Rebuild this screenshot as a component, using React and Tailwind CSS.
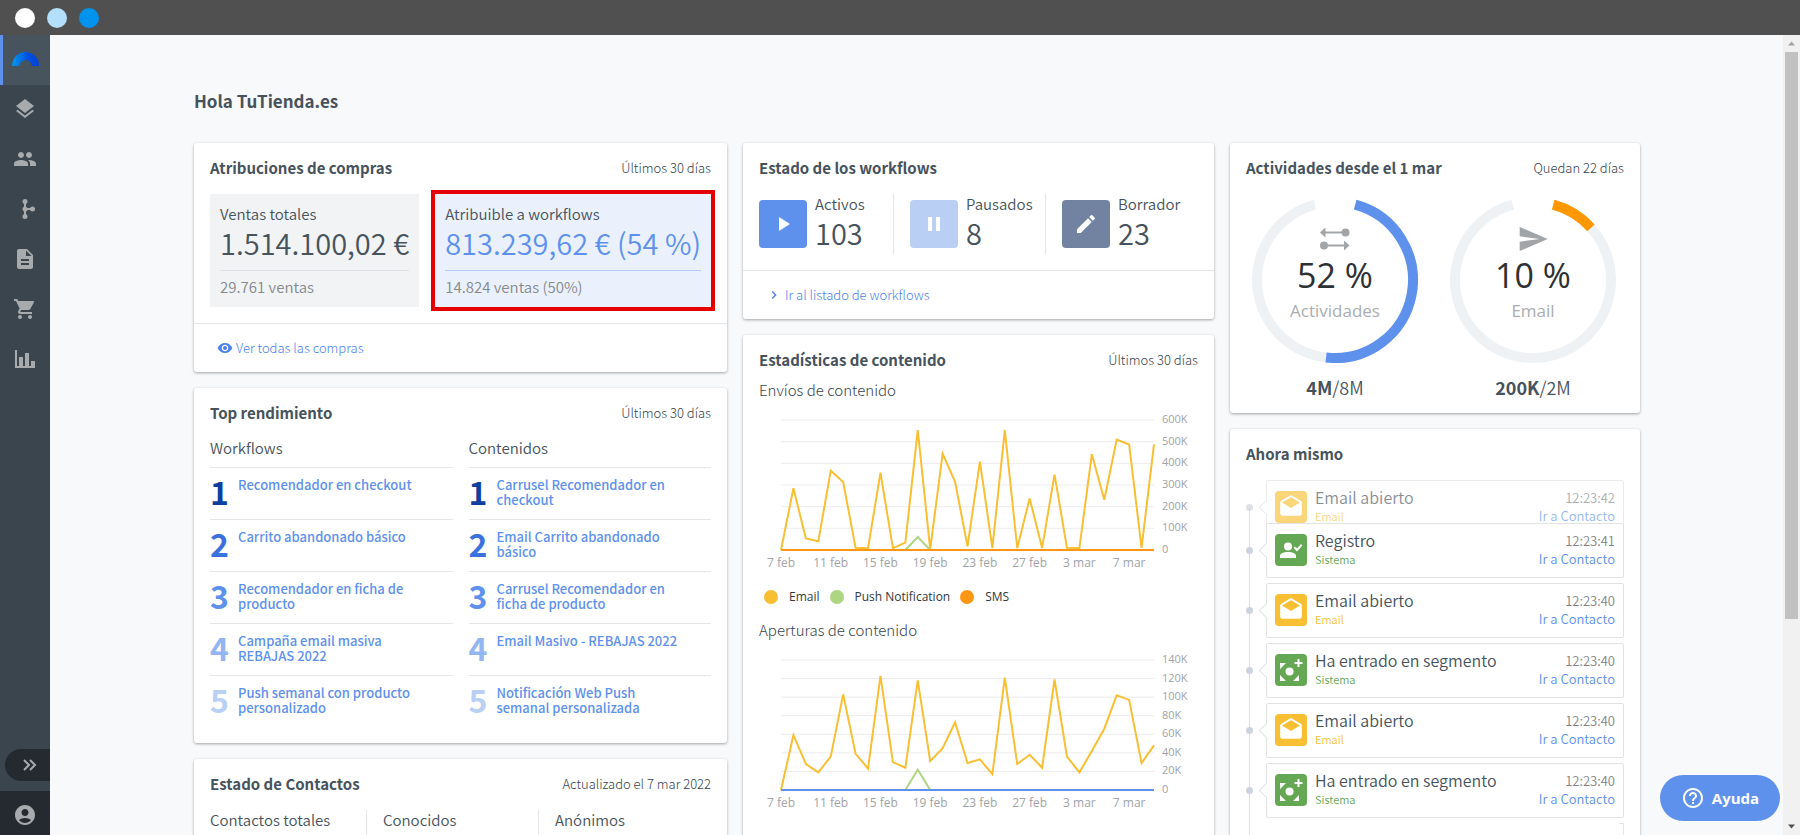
import {
  MdAccountCircle,
  MdChevronRight,
  MdDescription,
  MdDrafts,
  MdEdit,
  MdHelpOutline,
  MdLayers,
  MdPause,
  MdPeople,
  MdPlayArrow,
  MdRemoveRedEye,
  MdSend,
  MdShoppingCart,
} from 'react-icons/md'

const sendsEmail = [0, 285, 53, 40, 366, 314, 10, 8, 357, 9, 34, 553, 3, 445, 315, 17, 408, 9, 553, 9, 238, 9, 348, 10, 9, 442, 232, 510, 487, 10, 487]
const opensEmail = [0, 59, 28, 19, 36, 103, 39, 23, 123, 30, 24, 118, 31, 45, 73, 29, 33, 17, 121, 28, 38, 24, 119, 36, 19, 42, 66, 102, 97, 29, 48]
const dayLabels = ['7 feb', '11 feb', '15 feb', '19 feb', '23 feb', '27 feb', '3 mar', '7 mar']

const rankColors = ['text-[#0d3f9e]', 'text-[#3a71dc]', 'text-[#5e91ec]', 'text-[#93b5f1]', 'text-[#b9cff4]']

const topWorkflows = [
  'Recomendador en checkout',
  'Carrito abandonado básico',
  'Recomendador en ficha de producto',
  'Campaña email masiva REBAJAS 2022',
  'Push semanal con producto personalizado',
]
const topContents = [
  'Carrusel Recomendador en checkout',
  'Email Carrito abandonado básico',
  'Carrusel Recomendador en ficha de producto',
  'Email Masivo - REBAJAS 2022',
  'Notificación Web Push semanal personalizada',
]

const events = [
  { type: 'email', title: 'Email abierto', time: '12:23:42' },
  { type: 'register', title: 'Registro', time: '12:23:41' },
  { type: 'email', title: 'Email abierto', time: '12:23:40' },
  { type: 'segment', title: 'Ha entrado en segmento', time: '12:23:40' },
  { type: 'email', title: 'Email abierto', time: '12:23:40' },
  { type: 'segment', title: 'Ha entrado en segmento', time: '12:23:40' },
]

const LogoIcon = () => (
  <svg width="27" height="14" viewBox="0 0 27 14">
    <defs>
      <linearGradient id="logo" x1="0" x2="1" y1="0" y2="0">
        <stop offset="0" stopColor="#0098e8" />
        <stop offset="0.6" stopColor="#0050e0" />
        <stop offset="1" stopColor="#0040d8" />
      </linearGradient>
    </defs>
    <path d="M0 14a13.500 14 0 0 1 27 0h-7.500a6 6 0 0 0-12 0z" fill="url(#logo)" />
  </svg>
)

const BranchIcon = () => (
  <svg width="24" height="24" viewBox="0 0 24 24" fill="currentColor">
    <circle cx="12" cy="4.500" r="2.500" />
    <circle cx="12" cy="12" r="2.500" />
    <circle cx="12" cy="19.500" r="2.500" />
    <circle cx="19.500" cy="12" r="2.500" />
    <path d="M11 4h2v7h6v2h-6v7h-2z" />
  </svg>
)

const BarsIcon = () => (
  <svg width="24" height="24" viewBox="0 0 24 24" fill="currentColor">
    <path d="M2 3h2v16h2V10h4v9h2V6h4v13h2v-5h4v7H2z" />
  </svg>
)

const SwapIcon = () => (
  <svg width="30" height="24" viewBox="0 0 30 24" fill="currentColor">
    <path d="M0 5.500l5.500-5v4H26v2H5.500v4z" />
    <circle cx="25.500" cy="5.500" r="4" />
    <path d="M29.500 18.500l-5.500-5v4H4v2h20v4z" />
    <circle cx="4" cy="18.500" r="4" />
  </svg>
)

const UserCheckIcon = () => (
  <svg width="32" height="32" viewBox="0 0 32 32" fill="#fff">
    <circle cx="13" cy="12.500" r="4" />
    <path d="M5 24v-2c0-3 4-4 8-4s8 1 8 4v2z" />
    <path d="M18.500 14l1.500-1.500 2 2 4-4.500 1.400 1.400-5.400 6z" />
  </svg>
)

const SegmentIcon = () => (
  <svg width="32" height="32" viewBox="0 0 32 32" fill="#fff">
    <circle cx="14.500" cy="17.500" r="4" />
    <path d="M5 9h6l-6 6zM5 21l6 6H5zM24 21v6h-6zM22.500 5h2v3h3v2h-3v3h-2v-3h-3V8h3z" />
  </svg>
)

const eventKinds = {
  email: { label: 'Email', color: 'text-[#f9bf33]', bg: 'bg-[#f9bf33]', icon: <MdDrafts size={26} className="text-white" /> },
  register: { label: 'Sistema', color: 'text-[#65a854]', bg: 'bg-[#65a854]', icon: <UserCheckIcon /> },
  segment: { label: 'Sistema', color: 'text-[#65a854]', bg: 'bg-[#65a854]', icon: <SegmentIcon /> },
}

const Card = ({ title, note, tight, children }) => (
  <section className="bg-white rounded-[3px] shadow-[0_1px_3px_rgba(0,0,0,0.35)]">
    <header className={`flex items-center justify-between px-4 pt-[15px] ${tight ? 'pb-[10px]' : 'pb-4'}`}>
      <h2 className="text-[15px] leading-5 font-bold">{title}</h2>
      {note && <span className="text-[13px] leading-5 font-light text-[#36424c]">{note}</span>}
    </header>
    {children}
  </section>
)

const CardLink = ({ icon, children }) => (
  <footer className="border-t border-[#e3e5e7] px-[23px] h-[49px] flex items-center">
    <a href="#" className="flex items-center gap-[3px] text-[13px] font-light text-[#4a82ea]">
      {icon}
      {children}
    </a>
  </footer>
)

const RankList = ({ title, items }) => (
  <div>
    <h3 className="text-[15px] leading-[18px] pb-[10px]">{title}</h3>
    <ol>
      {items.map((item, index) => (
        <li key={item} className="flex h-[52px] border-t border-[#e3e5e7] pt-[9px]">
          <span className={`w-7 shrink-0 text-[32px] leading-7 font-bold ${rankColors[index]}`}>{index + 1}</span>
          <a href="#" className="text-[13px] leading-[15px] font-medium text-[#5e91ec] max-w-[188px]">{item}</a>
        </li>
      ))}
    </ol>
  </div>
)

const StatusItem = ({ icon, bg, label, value }) => (
  <div className="flex items-center gap-2 h-[60px]">
    <div className={`w-12 h-12 rounded-[4px] flex items-center justify-center text-white ${bg}`}>{icon}</div>
    <div>
      <p className="text-[15px] leading-5">{label}</p>
      <p className="text-[29px] leading-9 pb-1">{value}</p>
    </div>
  </div>
)

const LineChart = ({ email, push, max, step, baseColor }) => {
  const left = 22
  const top = 20
  const width = 373
  const height = 130
  const x = (i) => left + (i * width) / 30
  const y = (v) => top + height - (v * height) / max
  const ticks = Array.from({ length: max / step + 1 }, (_, i) => i * step)
  return (
    <svg viewBox="0 0 439 172" className="w-full h-auto font-normal font-['Open_Sans','Noto_Sans',sans-serif]">
      {ticks.map((t) => (
        <g key={t}>
          <line x1={left} x2={left + width} y1={y(t)} y2={y(t)} stroke="#ececec" />
          <text x={left + width + 8} y={y(t) + 3} fontSize="11" fill="#a0a3a6">{t ? `${t}K` : '0'}</text>
        </g>
      ))}
      <polyline points={email.map((v, i) => `${x(i)},${y(v)}`).join(' ')} fill="none" stroke="#f9bf33" strokeWidth="2" />
      <polyline points={`${x(10)},${y(0)} ${x(11)},${y(push)} ${x(12)},${y(0)}`} fill="none" stroke="#aed581" strokeWidth="2" />
      <line x1={left} x2={left + width} y1={y(0)} y2={y(0)} stroke={baseColor} strokeWidth="2" />
      {dayLabels.map((label, i) => (
        <text key={label} x={x(i * 4)} y={top + height + 17} fontSize="12" textAnchor="middle" fill="#a0a3a6">{label}</text>
      ))}
    </svg>
  )
}

const LegendItem = ({ color, label }) => (
  <span className="flex items-center gap-[11px]">
    <span className={`w-[14px] h-[14px] rounded-full ${color}`} />
    {label}
  </span>
)

const arc = (from, to) => {
  const point = (deg) => {
    const rad = (deg * Math.PI) / 180
    return `${83 + 78 * Math.sin(rad)} ${83 - 78 * Math.cos(rad)}`
  }
  return `M${point(from)}A78 78 0 ${to - from > 180 ? 1 : 0} 1 ${point(to)}`
}

const Gauge = ({ icon, percent, color, label, used, total }) => (
  <div className="flex flex-col items-center">
    <div className="relative w-[166px] h-[166px]">
      <svg viewBox="0 0 166 166" className="w-full h-full" fill="none" strokeWidth="10">
        <path d={arc(15, 345)} stroke="#eff2f5" />
        <path d={arc(15, 15 + (percent * 330) / 100)} stroke={color} />
      </svg>
      <div className="absolute inset-0 flex flex-col items-center pt-[30px] font-normal font-['Open_Sans','Noto_Sans',sans-serif]">
        <span className="h-6 flex items-center text-[#a1a5a8]">{icon}</span>
        <span className="text-[34px] leading-[48px] text-[#2e3133]">{percent} %</span>
        <span className="text-[17px] leading-6 text-[#aaadaf]">{label}</span>
      </div>
    </div>
    <p className="text-lg leading-6 pt-3">
      <strong>{used}</strong>/{total}
    </p>
  </div>
)

const EventRow = ({ event, index }) => {
  const kind = eventKinds[event.type]
  return (
    <li className={`relative flex items-center ${index === 0 ? 'opacity-65' : ''} ${index === 1 ? '-mt-[17px]' : ''}`}>
      <span className="w-[7px] h-[7px] rounded-full bg-[#cdd3dc] shrink-0" />
      <div className="relative ml-[13px] flex-1 h-[55px] bg-white border border-[#e0e2e4] rounded-[2px] flex justify-between pl-2 pr-2">
        <span className="absolute -left-[6px] top-[21px] w-[11px] h-[11px] rotate-45 bg-white border-l border-b border-[#e0e2e4]" />
        <div className="flex gap-2 pt-[10px]">
          <span className={`relative w-8 h-8 rounded-[4px] flex items-center justify-center ${kind.bg}`}>{kind.icon}</span>
          <div className="-mt-1">
            <p className="text-base leading-5">{event.title}</p>
            <p className={`text-[11px] leading-[18px] ${kind.color}`}>{kind.label}</p>
          </div>
        </div>
        <div className="text-[13px] leading-[18px] pt-[8px] text-right">
          <p className="text-[#7e8386]">{event.time}</p>
          <a href="#" className="text-[#5e91ec]">Ir a Contacto</a>
        </div>
      </div>
    </li>
  )
}

const NavItem = ({ label, children }) => (
  <a href="#" aria-label={label} className="h-[50px] pb-[2px] flex items-center justify-center">
    {children}
  </a>
)

const Sidebar = () => (
  <nav className="w-[50px] shrink-0 bg-[#3b454d] text-[#a7abad] flex flex-col">
    <a href="#" aria-label="Inicio" className="h-[50px] pb-[2px] pr-[3px] flex items-center justify-center border-l-[3px] border-[#5e91ec] bg-[#48545d]">
      <LogoIcon />
    </a>
    <NavItem label="Contenidos"><MdLayers size={24} /></NavItem>
    <NavItem label="Contactos"><MdPeople size={24} /></NavItem>
    <NavItem label="Workflows"><BranchIcon /></NavItem>
    <NavItem label="Documentos"><MdDescription size={24} /></NavItem>
    <NavItem label="Compras"><MdShoppingCart size={24} /></NavItem>
    <NavItem label="Informes"><BarsIcon /></NavItem>
    <button type="button" aria-label="Expandir" className="mt-auto mb-[10px] ml-[5px] h-8 rounded-l-full bg-[#252a31] flex items-center justify-center pl-1">
      <svg width="14" height="12" viewBox="0 0 14 12" fill="none" stroke="currentColor" strokeWidth="2">
        <path d="M1 1l5 5-5 5M7 1l5 5-5 5" />
      </svg>
    </button>
    <a href="#" aria-label="Cuenta" className="h-11 bg-[#252a31] flex items-center justify-center pt-1">
      <MdAccountCircle size={24} />
    </a>
  </nav>
)

const Scrollbar = () => (
  <div className="w-[17px] shrink-0 bg-[#f1f1f1] flex flex-col items-center justify-between">
    <svg width="17" height="17" viewBox="0 0 17 17"><path d="M5 10.500l3.500-4 3.500 4z" fill="#a3a3a3" /></svg>
    <div className="flex-1 w-full px-[2px]">
      <div className="h-[74%] bg-[#c1c1c1]" />
    </div>
    <svg width="17" height="17" viewBox="0 0 17 17"><path d="M5 6.500l3.500 4 3.500-4z" fill="#505050" /></svg>
  </div>
)

export default function App() {
  return (
    <div className="h-screen flex flex-col overflow-hidden font-[350] text-[#46525c] font-['Noto_Sans_CJK_JP','Open_Sans',sans-serif]">
      <div className="h-[35px] shrink-0 bg-[#505050] flex items-center gap-3 px-[15px]">
        <span className="w-5 h-5 rounded-full bg-white" />
        <span className="w-5 h-5 rounded-full bg-[#b3dffa]" />
        <span className="w-5 h-5 rounded-full bg-[#0093ed]" />
      </div>

      <div className="relative flex flex-1 min-h-0">
        <Sidebar />

        <main className="flex-1 min-w-0 overflow-hidden bg-[#f8f9fb] pl-[25px] pr-6">
          <div className="w-full max-w-[1446px] mx-auto pt-[54px]">
            <h1 className="text-[17px] leading-6 font-bold pb-[30px]">Hola TuTienda.es</h1>

            <div className="grid grid-cols-[533fr_471fr_410fr] gap-4 items-start">
              {/* Left column */}
              <div className="flex flex-col gap-4">
                <Card title="Atribuciones de compras" note="Últimos 30 días">
                  <div className="flex justify-between px-4 pb-4">
                    <div className="bg-[#f1f3f5] px-[10px] pt-[10px] h-[113px]">
                      <p className="text-[15px] leading-5">Ventas totales</p>
                      <p className="text-[29px] leading-9">1.514.100,02 €</p>
                      <p className="mt-[10px] pt-[6px] border-t border-[#dfe2e4] text-[15px] leading-5 text-[#85898c]">29.761 ventas</p>
                    </div>
                    <div className="bg-[#eaf1fc] px-[10px] pt-[10px] h-[113px] outline-[4px] outline-[#e50000]">
                      <p className="text-[15px] leading-5">Atribuible a workflows</p>
                      <p className="text-[29px] leading-9 text-[#5e91ec]">813.239,62 € (54 %)</p>
                      <p className="mt-[10px] pt-[6px] border-t border-[#b3cdf5] text-[15px] leading-5 text-[#85898c]">14.824 ventas (50%)</p>
                    </div>
                  </div>
                  <CardLink icon={<MdRemoveRedEye size={16} />}>Ver todas las compras</CardLink>
                </Card>

                <Card title="Top rendimiento" note="Últimos 30 días">
                  <div className="grid grid-cols-2 gap-4 px-4 pb-4">
                    <RankList title="Workflows" items={topWorkflows} />
                    <RankList title="Contenidos" items={topContents} />
                  </div>
                </Card>

                <Card title="Estado de Contactos" note="Actualizado el 7 mar 2022">
                  <div className="grid grid-cols-[157fr_172fr_172fr] px-4 pb-4 text-[15px] leading-5 divide-x divide-[#e3e5e7]">
                    <p className="h-20">Contactos totales</p>
                    <p className="h-20 pl-4">Conocidos</p>
                    <p className="h-20 pl-4">Anónimos</p>
                  </div>
                </Card>
              </div>

              {/* Middle column */}
              <div className="flex flex-col gap-4">
                <Card title="Estado de los workflows">
                  <div className="grid grid-cols-[135fr_152fr_152fr] px-4 pb-4 divide-x divide-[#e3e5e7]">
                    <StatusItem icon={<MdPlayArrow size={24} />} bg="bg-[#5e91ec]" label="Activos" value="103" />
                    <div className="pl-4">
                      <StatusItem icon={<MdPause size={24} />} bg="bg-[#b9cff4]" label="Pausados" value="8" />
                    </div>
                    <div className="pl-4">
                      <StatusItem icon={<MdEdit size={24} />} bg="bg-[#7283a1]" label="Borrador" value="23" />
                    </div>
                  </div>
                  <CardLink icon={<MdChevronRight size={16} />}>Ir al listado de workflows</CardLink>
                </Card>

                <Card title="Estadísticas de contenido" note="Últimos 30 días" tight>
                  <div className="px-4 pb-16">
                    <h3 className="text-[15px] leading-5 font-light text-[#36424c]">Envíos de contenido</h3>
                    <LineChart email={sendsEmail} push={60} max={600} step={100} baseColor="#ff9715" />
                    <div className="flex gap-[10px] px-[5px] leading-5 pt-[15px] pb-[13px] text-xs font-normal text-[#33383c] font-['Open_Sans','Noto_Sans',sans-serif]">
                      <LegendItem color="bg-[#f9bf33]" label="Email" />
                      <LegendItem color="bg-[#aed581]" label="Push Notification" />
                      <LegendItem color="bg-[#ff9715]" label="SMS" />
                    </div>
                    <h3 className="text-[15px] leading-5 font-light text-[#36424c]">Aperturas de contenido</h3>
                    <LineChart email={opensEmail} push={22} max={140} step={20} baseColor="#5e91ec" />
                  </div>
                </Card>
              </div>

              {/* Right column */}
              <div className="flex flex-col gap-4">
                <Card title="Actividades desde el 1 mar" note="Quedan 22 días">
                  <div className="flex justify-around pl-[6px] pr-2 pt-[3px] pb-[14px]">
                    <Gauge icon={<SwapIcon />} percent={52} color="#5e91ec" label="Actividades" used="4M" total="8M" />
                    <Gauge icon={<MdSend size={32} />} percent={10} color="#ff9800" label="Email" used="200K" total="2M" />
                  </div>
                </Card>

                <Card title="Ahora mismo">
                  <div className="relative px-4 pb-4">
                    <span className="absolute left-[19px] top-7 bottom-0 w-px bg-[#dde0e4]" />
                    <ul className="flex flex-col gap-[5px]">
                      {events.map((event, index) => (
                        <EventRow key={index} event={event} index={index} />
                      ))}
                      <li className="self-end w-[5px] h-[55px] border-t border-r border-[#e3e5e7]" />
                    </ul>
                  </div>
                </Card>
              </div>
            </div>
          </div>
        </main>

        <Scrollbar />

        <button type="button" className="absolute right-5 bottom-[14px] w-[120px] h-[46px] rounded-full bg-[#5e91ec] text-white text-[15px] font-bold flex items-center justify-center gap-[7px] font-['Open_Sans',sans-serif]">
          <MdHelpOutline size={24} />
          Ayuda
        </button>
      </div>
    </div>
  )
}
